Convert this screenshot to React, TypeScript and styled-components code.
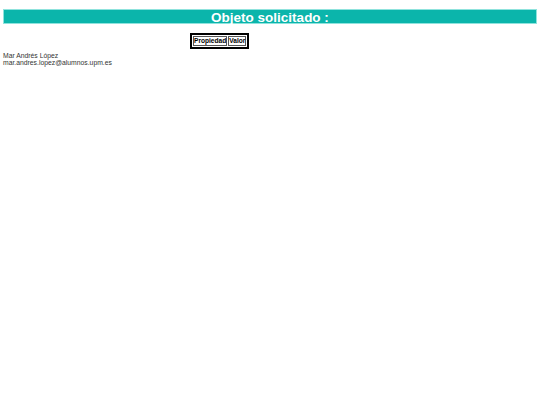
import styled, { createGlobalStyle } from 'styled-components';

const GlobalStyle = createGlobalStyle`
  html, body {
    margin: 0;
    padding: 0;
    background: #ffffff;
    font-family: 'Liberation Sans', Arial, sans-serif;
  }
`;

const Page = styled.div`
  padding: 9px 3px 0;
`;

const Title = styled.h1`
  margin: 0;
  height: 15px;
  line-height: 15px;
  background: #0bb5ab;
  border: 1px solid #8fe3dd;
  box-sizing: border-box;
  color: #ffffff;
  font-size: 13.5px;
  font-weight: 700;
  text-align: center;
`;

const Table = styled.table`
  margin: 9px 0 0 187px;
  border: 2px solid #000000;
  border-collapse: separate;
  border-spacing: 1px;
  padding: 0;
`;

const Th = styled.th`
  border: 1px solid #555555;
  padding: 0;
  font-size: 6.6px;
  font-weight: 700;
  line-height: 7.5px;
  color: #000000;
`;

const Footer = styled.div`
  margin-top: 3px;
  font-size: 6.8px;
  line-height: 7.5px;
  color: #333333;
`;

export default function App() {
  return (
    <>
      <GlobalStyle />
      <Page>
        <Title>Objeto solicitado :</Title>
        <Table>
          <thead>
            <tr>
              <Th>Propiedad</Th>
              <Th>Valor</Th>
            </tr>
          </thead>
        </Table>
        <Footer>
          <div>Mar Andrés López</div>
          <div>mar.andres.lopez@alumnos.upm.es</div>
        </Footer>
      </Page>
    </>
  );
}
